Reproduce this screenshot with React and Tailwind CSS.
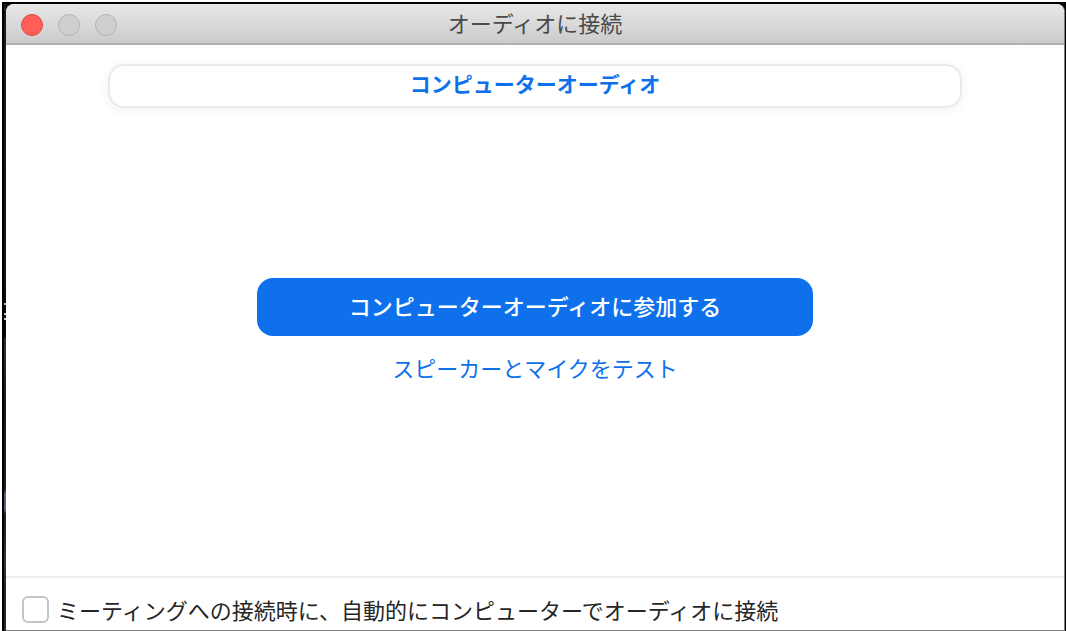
import { useState } from "react";

const TitleBar = ({ title }) => {
  return (
    <header className="grid h-[41px] grid-cols-[1fr_auto_1fr] items-center rounded-t-lg border-b-2 border-[#b0b0b0] bg-linear-to-b from-[#e8e8e8] to-[#cbcbcb] px-[15px] pt-0.5">
      <div className="flex gap-[15px]">
        <button
          type="button"
          aria-label="閉じる"
          className="size-[22px] rounded-full border border-[#e2463f] bg-[#ff5f57]"
        />
        <button
          type="button"
          aria-label="しまう"
          disabled
          className="size-[22px] rounded-full border border-[#b3b3b3] bg-[#cfcfcf]"
        />
        <button
          type="button"
          aria-label="拡大"
          disabled
          className="size-[22px] rounded-full border border-[#b3b3b3] bg-[#cfcfcf]"
        />
      </div>
      <h1 className="text-[22px] leading-8 text-[#4a4a4a]">{title}</h1>
    </header>
  );
};

const App = () => {
  const [autoJoin, setAutoJoin] = useState(false);

  return (
    <div className="flex min-h-screen bg-white pt-0.5 pl-0.5 font-['Liberation_Sans','Noto_Sans_CJK_JP',sans-serif]">
      <div className="flex flex-1 border-t-2 border-r border-l-2 border-black bg-[#0a0a0c]">
        {/* Sliver of the desktop behind the window */}
        <div className="w-0.5 bg-[linear-gradient(#1c1c20_0,#141416_280px,#08080a_298px,#08080a_299px,#bbb_299px,#bbb_301px,#08080a_301px,#08080a_309px,#ccc_309px,#ccc_311px,#08080a_311px,#08080a_314px,#ccc_314px,#ccc_316px,#08080a_316px,#08080a_332px,#3a2d42_336px,#1c1620_400px,#241c28_485px,#5c5c7c_490px,#5c5c7c_506px,#2a1a22_510px,#3c3428_560px,#2c2232_580px,#2c2232_100%)]" />

        <div className="flex flex-1 flex-col rounded-t-lg border-r border-b border-[#808080] bg-white">
          <TitleBar title="オーディオに接続" />

          <nav className="px-[102px] pt-[19px]">
            <button
              type="button"
              className="h-11 w-full rounded-2xl border-2 border-[#e9e9f0] bg-white pb-0.5 text-[21px] leading-8 font-bold text-[#0e71eb] shadow-[0_2px_12px_rgba(0,0,0,0.06)]"
            >
              コンピューターオーディオ
            </button>
          </nav>

          <main className="flex flex-1 flex-col items-center justify-center gap-[18px] pb-5">
            <button
              type="button"
              className="h-[58px] w-[556px] max-w-full rounded-2xl bg-[#0e71eb] pt-0.5 text-[22px] leading-8 font-medium text-white"
            >
              コンピューターオーディオに参加する
            </button>
            <a href="#test" className="text-[22px] leading-8 text-[#0e71eb]">
              スピーカーとマイクをテスト
            </a>
          </main>

          <footer className="flex items-start gap-2 border-t-2 border-[#ececf2] px-4 pt-[18px] pb-0.5">
            <input
              id="auto-join"
              type="checkbox"
              checked={autoJoin}
              onChange={(e) => setAutoJoin(e.target.checked)}
              className="size-[27px] shrink-0 appearance-none rounded-md border-2 border-[#c4c4c4] bg-white checked:bg-[#0e71eb]"
            />
            <label
              htmlFor="auto-join"
              className="text-[22px] leading-8 text-[#262626]"
            >
              ミーティングへの接続時に、自動的にコンピューターでオーディオに接続
            </label>
          </footer>
        </div>
      </div>
    </div>
  );
};

export default App;
